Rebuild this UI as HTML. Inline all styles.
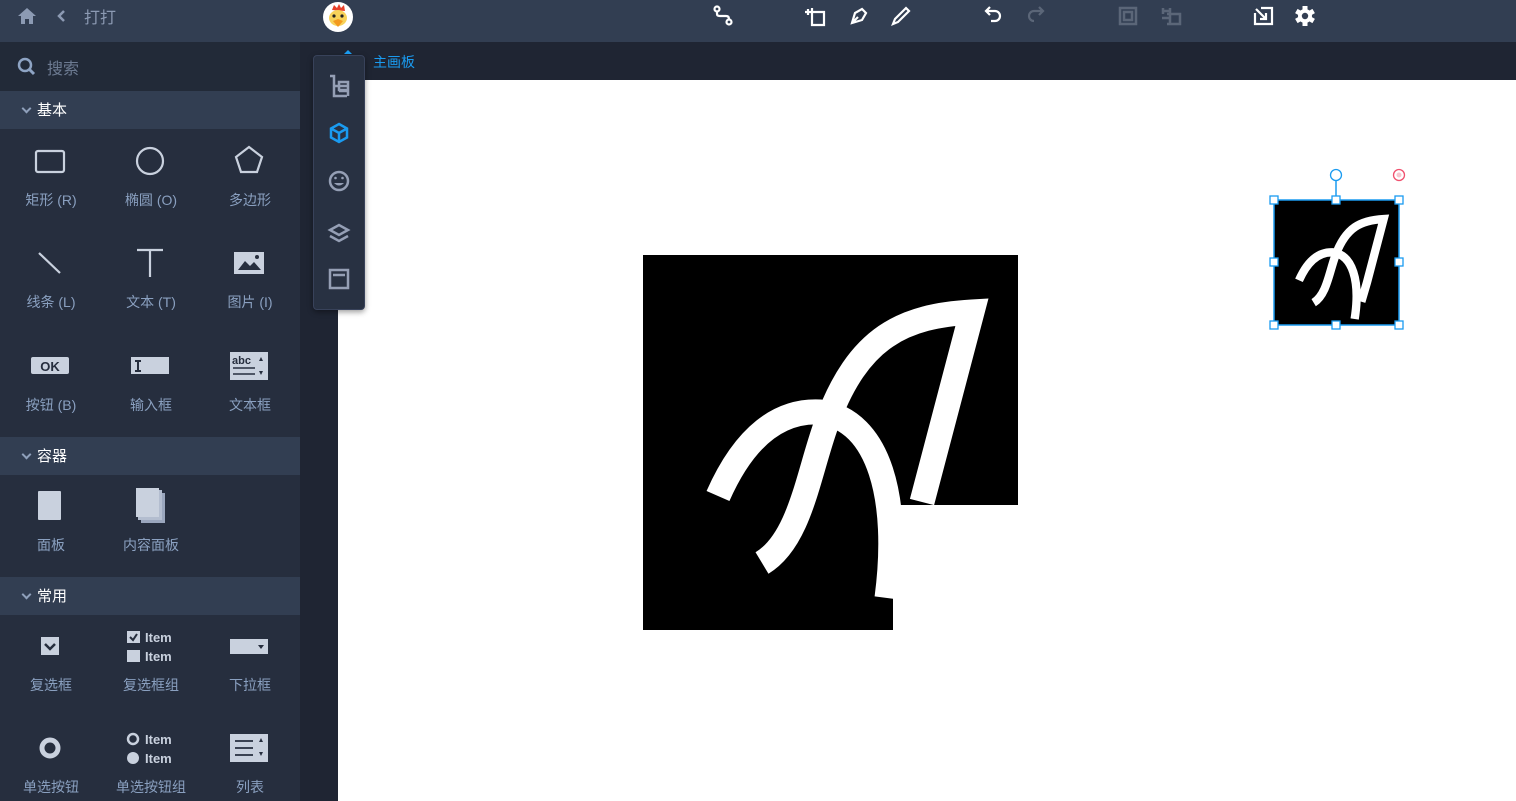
<!DOCTYPE html>
<html><head><meta charset="utf-8">
<style>
*{margin:0;padding:0;box-sizing:border-box}
body{width:1516px;height:801px;overflow:hidden;background:#fff;font-family:"Liberation Sans","Noto Sans CJK SC",sans-serif;position:relative}
.abs{position:absolute}
#top{left:0;top:0;width:1516px;height:42px;background:#323e52}
#side{left:0;top:42px;width:300px;height:759px;background:#262e3e}
.search{left:0;top:42px;width:300px;height:49px;background:#222a38}
.sec{left:0;width:300px;height:38px;background:#323e52;color:#fff;font-size:15px;line-height:40px;padding-left:37px}
.sec:before{content:"";position:absolute;left:23px;top:14px;width:5px;height:5px;border-right:2px solid #8fa0bb;border-bottom:2px solid #8fa0bb;transform:rotate(45deg)}
.lbl{position:absolute;width:100px;text-align:center;color:#8aa0c0;font-size:14px;transform:translateX(-50%)}
</style></head><body>
<div id="top" class="abs"></div>
<svg class="abs" style="left:17px;top:7px" width="20" height="18" viewBox="0 0 20 18"><path d="M10 1 L1 9 H4 V17 H8 V12 H12 V17 H16 V9 H19 Z" fill="#8c9ab3"/></svg>
<svg class="abs" style="left:57px;top:9px" width="10" height="14"><path d="M7 2 L2 7 L7 12" stroke="#8c9ab3" stroke-width="2.5" fill="none"/></svg>
<div class="abs" style="left:84px;top:4px;color:#8c9ab3;font-size:16px">打打</div>
<svg class="abs" style="left:323px;top:1px" width="30" height="31" viewBox="0 0 30 31"><circle cx="15" cy="16" r="15" fill="#fff"/><path d="M9 9 L11 4 L14 7 L16 3 L18 7 L21 4 L22 10 Z" fill="#e8402a"/><ellipse cx="15" cy="17" rx="9" ry="8" fill="#f7d25a"/><circle cx="11" cy="15" r="1.6" fill="#222"/><circle cx="19" cy="15" r="1.6" fill="#222"/><path d="M10 20 L15 18 L20 20 L15 26 Z" fill="#f39a1e"/></svg>
<svg class="abs" style="left:0;top:0" width="1516" height="42">
<g fill="none" stroke="#fff" stroke-width="2.2">
<circle cx="717" cy="9" r="2.5"/><circle cx="729" cy="22" r="2.5"/><path d="M717 11 V14 Q717 16 720 16 H726 Q729 16 729 19"/>
<path d="M808 12 H824 V25 H812 V8 M805 12 H811 M808 9 V15"/>
<path d="M852 23 L855 13 L862 9 L866 13 L862 20 Z M852 23 L858 17" />
<path d="M893 24 L895 19 L906 8 L909 11 L898 22 Z"/>
<path d="M987 11 H995 A5 5 0 0 1 995 21 H991 M990 7 L986 11 L990 15"/>
</g>
<path d="M1042 11 H1034 A5 5 0 0 0 1034 21 M1039 7 L1043 11 L1039 15" stroke="#5b6678" stroke-width="2.2" fill="none"/>
<g fill="none" stroke="#5b6678" stroke-width="2.5"><rect x="1120" y="8" width="16" height="16"/><rect x="1124" y="12" width="8" height="8"/>
<path d="M1163 8 V14 M1163 11 H1170 M1170 8 V24 M1167 14 H1180 V24 H1167 M1162 18 H1170"/></g>
<g fill="none" stroke="#fff" stroke-width="2.2"><path d="M1255 13 V24 H1272 V8 H1261"/><path d="M1256 9 L1266 19 M1266 13 V19 H1260"/></g>
<g transform="translate(1305,16)" fill="#fff"><circle r="7"/><g><rect x="-2.5" y="-10" width="5" height="20"/><rect x="-2.5" y="-10" width="5" height="20" transform="rotate(60)"/><rect x="-2.5" y="-10" width="5" height="20" transform="rotate(120)"/></g><circle r="3.2" fill="#323e52"/></g>
</svg>

<div id="side" class="abs"></div>
<div class="abs search"></div>
<svg class="abs" style="left:17px;top:57px" width="20" height="20"><circle cx="8" cy="8" r="6" stroke="#8ea4c4" stroke-width="2.5" fill="none"/><path d="M12 12 L17 17" stroke="#8ea4c4" stroke-width="3"/></svg>
<div class="abs" style="left:47px;top:55px;color:#6d7b92;font-size:16px">搜索</div>
<div class="abs sec" style="top:91px">基本</div>
<div class="abs sec" style="top:437px">容器</div>
<div class="abs sec" style="top:577px">常用</div>

<svg class="abs" style="left:0;top:0" width="300" height="801">
<g fill="none" stroke="#c9d1de" stroke-width="2.2">
<rect x="36" y="151" width="28" height="21" rx="2"/>
<circle cx="150" cy="161" r="13"/>
<path d="M249 147 L262 157 L257 172 L241 172 L236 157 Z"/>
<path d="M39 253 L60 273"/>
<path d="M137 250 H163 M150 250 V277"/>
</g>
<rect x="234" y="252" width="30" height="22" fill="#c9d1de"/><path d="M238 270 L245 261 L250 266 L254 262 L261 270 Z" fill="#262e3e"/><circle cx="257" cy="257" r="2" fill="#262e3e"/>
<rect x="31" y="357" width="38" height="17" rx="2" fill="#c9d1de"/>
<text x="50" y="371" text-anchor="middle" font-family="Liberation Sans" font-weight="bold" font-size="13" fill="#262e3e">OK</text>
<rect x="131" y="357" width="38" height="17" fill="#c9d1de"/><path d="M135 361 H141 M138 361 V371 M135 371 H141" stroke="#262e3e" stroke-width="2"/>
<rect x="230" y="352" width="38" height="28" fill="#c9d1de"/><text x="232" y="364" font-family="Liberation Sans" font-weight="bold" font-size="11" fill="#262e3e">abc</text>
<path d="M233 368 H255 M233 374 H255" stroke="#262e3e" stroke-width="1.5"/><path d="M259 361 L261 357 L263 361 Z M259 371 L263 371 L261 375 Z" fill="#262e3e"/>
<rect x="38" y="491" width="23" height="29" rx="1" fill="#c9d1de"/>
<rect x="141" y="493" width="24" height="30" fill="#9aa6bd"/><rect x="138" y="490" width="24" height="30" fill="#b3bdcf"/><rect x="136" y="488" width="23" height="29" fill="#c9d1de"/>
<rect x="41" y="637" width="18" height="18" fill="#c9d1de"/><path d="M45 644 L50 649 L55 644" stroke="#262e3e" stroke-width="2.5" fill="none"/>
<rect x="127" y="631" width="13" height="12" fill="#c9d1de"/><path d="M130 637 L133 640 L137 634" stroke="#262e3e" stroke-width="2" fill="none"/>
<rect x="127" y="650" width="13" height="12" fill="#c9d1de"/>
<rect x="230" y="639" width="38" height="15" fill="#c9d1de"/><path d="M258 645 L264 645 L261 649 Z" fill="#262e3e"/>
<circle cx="50" cy="748" r="8" stroke="#c9d1de" stroke-width="5" fill="none"/>
<circle cx="133" cy="739" r="5" stroke="#c9d1de" stroke-width="2.5" fill="none"/><circle cx="133" cy="758" r="6" fill="#c9d1de"/>
<text x="145" y="642" font-family="Liberation Sans" font-weight="bold" font-size="13" fill="#c9d1de">Item</text><text x="145" y="661" font-family="Liberation Sans" font-weight="bold" font-size="13" fill="#c9d1de">Item</text>
<text x="145" y="744" font-family="Liberation Sans" font-weight="bold" font-size="13" fill="#c9d1de">Item</text><text x="145" y="763" font-family="Liberation Sans" font-weight="bold" font-size="13" fill="#c9d1de">Item</text>
<rect x="230" y="734" width="38" height="28" fill="#c9d1de"/><path d="M235 741 H253 M235 748 H253 M235 755 H253" stroke="#262e3e" stroke-width="1.8"/><path d="M259 742 L261 738 L263 742 Z M259 752 L263 752 L261 756 Z" fill="#262e3e"/>
</svg>

<div class="lbl" style="left:51px;top:190px">矩形 (R)</div>
<div class="lbl" style="left:151px;top:190px">椭圆 (O)</div>
<div class="lbl" style="left:250px;top:190px">多边形</div>
<div class="lbl" style="left:51px;top:292px">线条 (L)</div>
<div class="lbl" style="left:151px;top:292px">文本 (T)</div>
<div class="lbl" style="left:250px;top:292px">图片 (I)</div>
<div class="lbl" style="left:51px;top:395px">按钮 (B)</div>
<div class="lbl" style="left:151px;top:395px">输入框</div>
<div class="lbl" style="left:250px;top:395px">文本框</div>
<div class="lbl" style="left:51px;top:535px">面板</div>
<div class="lbl" style="left:151px;top:535px">内容面板</div>
<div class="lbl" style="left:51px;top:675px">复选框</div>
<div class="lbl" style="left:151px;top:675px">复选框组</div>
<div class="lbl" style="left:250px;top:675px">下拉框</div>
<div class="lbl" style="left:51px;top:777px">单选按钮</div>
<div class="lbl" style="left:151px;top:777px">单选按钮组</div>
<div class="lbl" style="left:250px;top:777px">列表</div>

<div class="abs" style="left:300px;top:42px;width:38px;height:759px;background:#1f2533"></div>
<div class="abs" style="left:300px;top:42px;width:1216px;height:38px;background:#1f2533"></div>
<div class="abs" style="left:373px;top:52px;color:#1a9bf0;font-size:14px">主画板</div>
<div class="abs" style="left:313px;top:55px;width:52px;height:255px;background:#283142;border:1px solid #38425a;border-radius:4px;box-shadow:0 2px 6px rgba(0,0,0,.4)"></div>
<svg class="abs" style="left:313px;top:45px" width="52" height="270">
<path d="M31 9 L35 5 L39 9 Z" fill="#1a9bf0"/>
<g fill="none" stroke="#959fb5" stroke-width="2.5">
<path d="M17 31 H21 V51 H34 M21 41 H34 M26 37 H35 V45 H26 Z M26 46 H35 V51"/>
<circle cx="26" cy="136" r="9"/>
<path d="M17 185 L26 180 L35 185 L26 190 Z M17 191 L26 196 L35 191"/>
<rect x="17" y="225" width="18" height="18"/><path d="M20 230 H32"/>
</g>
<g fill="none" stroke="#1a9bf0" stroke-width="2.5"><path d="M26 79 L34 83.5 V92.5 L26 97 L18 92.5 V83.5 Z M18 83.5 L26 88 L34 83.5 M26 88 V97"/></g>
<circle cx="22.5" cy="133" r="1.3" fill="#959fb5"/><circle cx="29.5" cy="133" r="1.3" fill="#959fb5"/><path d="M21 138 Q26 143 31 138 Z" fill="#959fb5"/>
</svg>

<svg class="abs" style="left:0;top:0" width="1516" height="801">
<defs><clipPath id="c"><path d="M643 255 H1018 V505 H893 V630 H643 Z"/></clipPath></defs>
<path d="M643 255 H1018 V505 H893 V630 H643 Z" fill="#000"/>
<g clip-path="url(#c)" fill="none" stroke="#fff" stroke-width="25" stroke-linejoin="miter">
<path d="M718 496 C745 435 780 410 820 412 C880 420 900 500 887 598"/>
<path d="M762 563 C800 540 808 475 826 425 C858 335 905 316 972 312 L922 502"/>
</g>
<rect x="1274" y="200" width="125" height="125" fill="#000"/>
<g transform="translate(1274,200) scale(0.3333) translate(-643,-255)" fill="none" stroke="#fff" stroke-width="25">
<path d="M718 496 C745 435 780 410 820 412 C880 420 900 500 887 598 L885 612"/>
<path d="M762 563 C800 540 808 475 826 425 C858 335 905 316 972 312 L922 502 L905 560"/>
</g>
<rect x="1274" y="200" width="125" height="125" fill="none" stroke="#1a9bf0" stroke-width="1.5"/>
<path d="M1336 181 V200" stroke="#1a9bf0" stroke-width="1.5"/>
<circle cx="1336" cy="175" r="5.5" fill="#fff" stroke="#1a9bf0" stroke-width="1.3"/>
<circle cx="1399" cy="175" r="5.5" fill="#fff" stroke="#f0506e" stroke-width="1.3"/><circle cx="1399" cy="175" r="2.5" fill="#f7c6cf"/>
<g fill="#fff" stroke="#1a9bf0" stroke-width="1.3">
<rect x="1270" y="196" width="8" height="8"/><rect x="1332" y="196" width="8" height="8"/><rect x="1395" y="196" width="8" height="8"/>
<rect x="1270" y="258" width="8" height="8"/><rect x="1395" y="258" width="8" height="8"/>
<rect x="1270" y="321" width="8" height="8"/><rect x="1332" y="321" width="8" height="8"/><rect x="1395" y="321" width="8" height="8"/>
</g>
</svg>
</body></html>
